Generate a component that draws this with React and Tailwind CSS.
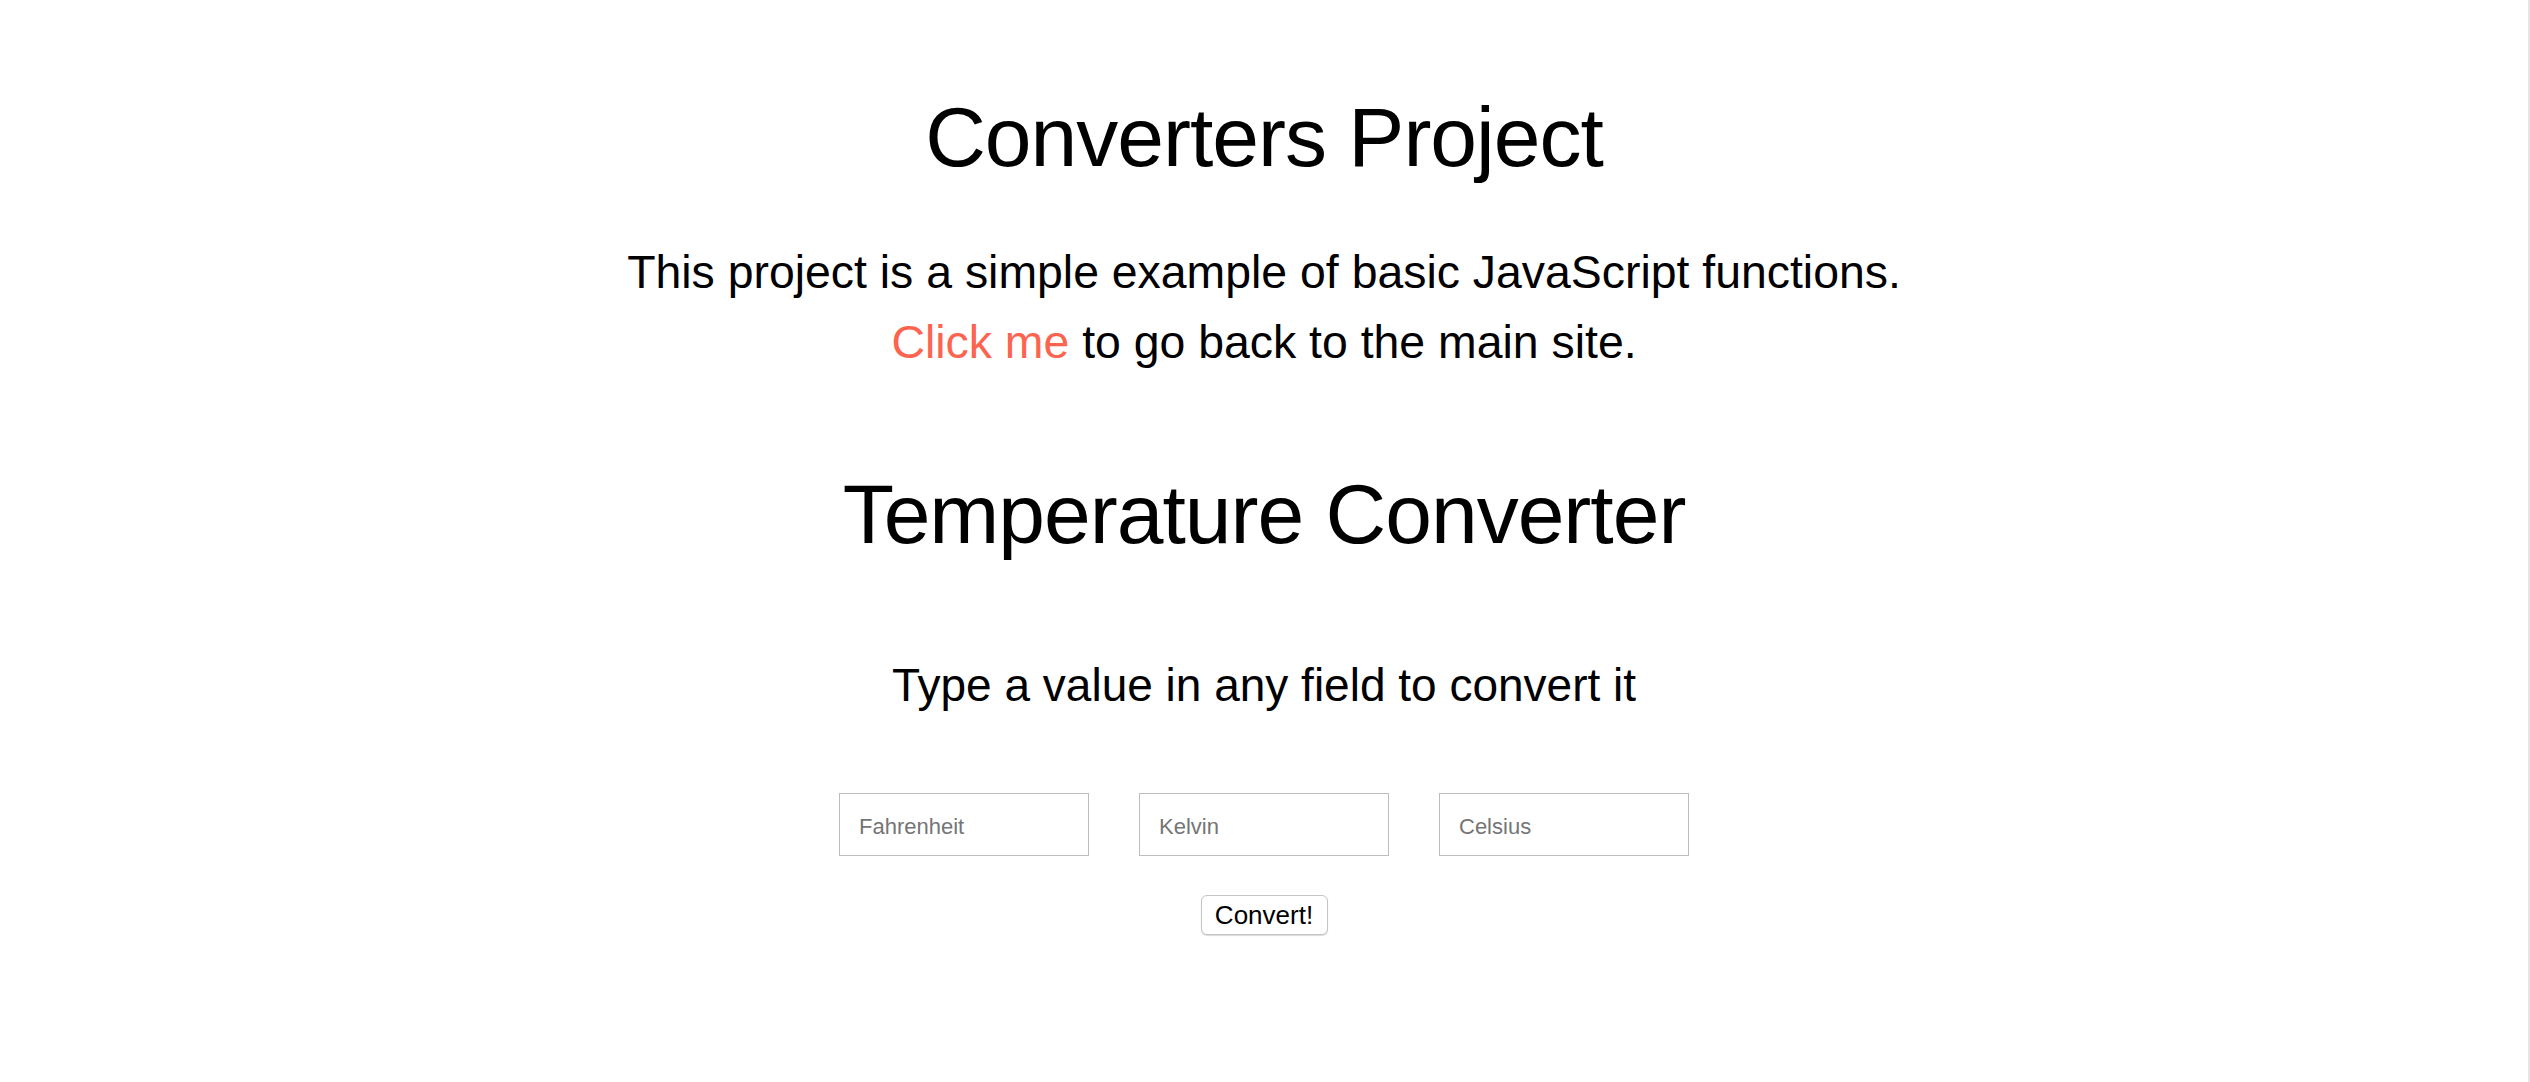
import React from "react";

export default function App() {
  const font = { fontFamily: '"Liberation Sans", Arial, Helvetica, sans-serif' };
  return (
    <div
      className="min-h-screen w-full bg-white text-black border-r-2 border-[#e6e6e6] flex flex-col items-center"
      style={font}
    >
      <h1 className="mt-[87px] text-[84px] leading-[100px] tracking-[-1px] font-normal text-center">
        Converters Project
      </h1>
      <p className="mt-[50px] text-[46.4px] leading-[70px] text-center">
        This project is a simple example of basic JavaScript functions.
        <br />
        <a href="#" className="text-[#fd6450]">Click me</a> to go back to the main site.
      </p>
      <h2 className="mt-[87px] text-[84px] leading-[100px] tracking-[-1px] font-normal text-center">
        Temperature Converter
      </h2>
      <p className="mt-[86px] text-[46px] leading-[70px] text-center">
        Type a value in any field to convert it
      </p>
      <div className="mt-[73px] flex gap-[50px]">
        {["Fahrenheit", "Kelvin", "Celsius"].map((p) => (
          <input
            key={p}
            type="text"
            placeholder={p}
            className="w-[250px] h-[63px] border border-[#bdbdbd] bg-white pl-[19px] pr-[10px] pt-[4px] text-[22px] text-black placeholder:text-[#757575] outline-none"
            style={font}
          />
        ))}
      </div>
      <button
        className="mt-[39px] w-[127px] h-[40px] rounded-[6px] border border-[#c4c4c4] bg-white text-[26px] leading-none text-black shadow-[0_1px_1px_rgba(0,0,0,0.15)]"
        style={font}
      >
        Convert!
      </button>
    </div>
  );
}
